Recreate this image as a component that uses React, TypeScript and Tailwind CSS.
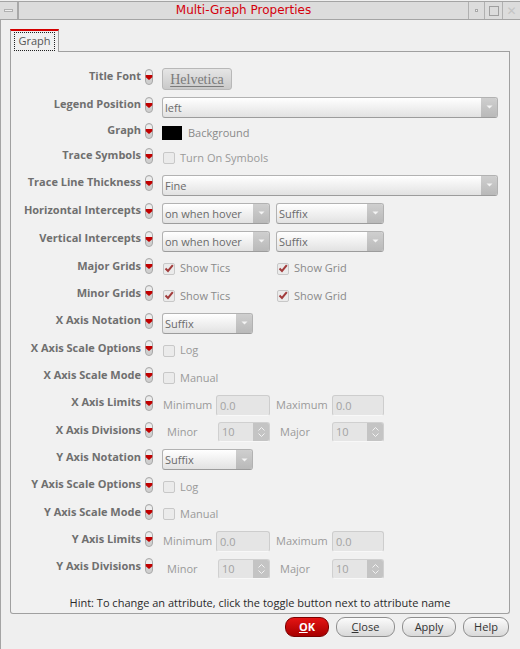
import React from "react";

const Toggle = () => (
  <svg width="8" height="16" viewBox="0 0 8 16" className="shrink-0">
    <rect x="0.5" y="0.5" width="7" height="15" rx="3.5" fill="#cfcfcf" stroke="#a9a9a9" />
    <path d="M1 4.5 A3 3 0 0 1 7 4.5 V6 H1 Z" fill="#ececec" />
    <path d="M0.7 6 H7.3 V8.2 L4 11 L0.7 8.2 Z" fill="#c00000" />
  </svg>
);

const Arrow = () => (
  <svg width="7" height="4" viewBox="0 0 7 4">
    <path d="M0.5 0.5 H6.5 L3.5 3.5 Z" fill="#f4f4f4" />
  </svg>
);

function Select({ value, w }: { value: string; w: string }) {
  return (
    <div
      className={`${w} h-[21px] flex rounded-[3px] border border-[#b2b2b2] border-b-[#9c9c9c] bg-gradient-to-b from-[#ffffff] to-[#e2e2e2] overflow-hidden`}
    >
      <span className="flex-1 pl-[2px] text-[11px] leading-[19px] text-[#6a6a6a]">{value}</span>
      <span className="w-[16px] flex items-center justify-center bg-gradient-to-b from-[#cfcfcf] to-[#b9b9b9]">
        <Arrow />
      </span>
    </div>
  );
}

function Field({ value, w }: { value: string; w: string }) {
  return (
    <div className={`${w} h-[21px] rounded-[3px] border border-[#cdcdcd] border-b-[#f8f8f8] bg-[#e5e5e5] pl-[3px] text-[11px] leading-[19px] text-[#a3a3a3]`}>
      {value}
    </div>
  );
}

function Spin({ value }: { value: string }) {
  return (
    <div className="w-[52px] h-[20px] flex rounded-[3px] border border-[#d0d0d0] border-b-[#f8f8f8] bg-[#e5e5e5] overflow-hidden">
      <span className="flex-1 pl-[3px] text-[11px] leading-[18px] text-[#a3a3a3]">{value}</span>
      <span className="w-[16px] flex flex-col items-center justify-center gap-[2px] bg-[#c4c4c4]">
        <svg width="7" height="4" viewBox="0 0 7 4">
          <path d="M0.5 3.5 L3.5 0.5 L6.5 3.5" fill="none" stroke="#f2f2f2" />
        </svg>
        <svg width="7" height="4" viewBox="0 0 7 4">
          <path d="M0.5 0.5 L3.5 3.5 L6.5 0.5" fill="none" stroke="#f2f2f2" />
        </svg>
      </span>
    </div>
  );
}

function Check({ label, checked, w, tone }: { label: string; checked?: boolean; w?: string; tone?: string }) {
  return (
    <div className={`flex items-center ${w ?? ""}`}>
      <span className="ml-[1px] w-[12px] h-[12px] rounded-[2px] border border-[#c8c8c8] bg-[#ebebeb] flex items-center justify-center">
        {checked && (
          <svg width="10" height="9" viewBox="0 0 10 9">
            <path d="M1.5 4.5 L4 7 L8.8 1.2" fill="none" stroke="#a23c3c" strokeWidth="2" />
          </svg>
        )}
      </span>
      <span className={`ml-[5px] text-[11px] ${tone ?? "text-[#8a8a8a]"}`}>{label}</span>
    </div>
  );
}

function Row({ label, h, children }: { label: string; h: string; children: React.ReactNode }) {
  return (
    <div className={`${h} flex items-center`}>
      <div className="flex items-center mb-[5px]">
        <span className="w-[130px] text-right text-[11px] font-bold text-[#6f6f6f] whitespace-nowrap">{label}</span>
        <span className="ml-[4px]">
          <Toggle />
        </span>
      </div>
      <div className="ml-[9px] flex items-center">{children}</div>
    </div>
  );
}

function Btn({ children, w, primary }: { children: React.ReactNode; w: string; primary?: boolean }) {
  return (
    <div
      className={`${w} h-[20px] rounded-[9px] border flex items-center justify-center text-[11px] ${
        primary
          ? "border-[#7a0000] bg-gradient-to-b from-[#e41414] to-[#a80000] text-white font-bold"
          : "border-[#8e8e8e] bg-gradient-to-b from-[#fbfbfb] to-[#d9d9d9] text-[#333333]"
      }`}
    >
      {children}
    </div>
  );
}

const dim = "text-[#9a9a9a]";

export default function App() {
  const rh = "h-[27.3px]";
  return (
    <div className="w-[520px] h-[649px] bg-[#efefef] flex flex-col font-['Open_Sans',sans-serif] overflow-hidden">
      {/* title bar */}
      <div className="mt-[1px] h-[19px] flex border-t border-b border-[#a4a4a4] bg-[#dcdcdc] font-['DejaVu_Sans',sans-serif]">
        <div className="w-[19px] border-r-2 border-[#a8a8a8] flex items-center justify-center">
          <span className="w-[9px] h-[3px] bg-[#efefef] border border-[#b0b0b0]" />
        </div>
        <div className="flex-1 text-center text-[12px] leading-[17px] text-[#d4000c]">Multi-Graph Properties</div>
        <div className="w-[17px] border-l border-r border-[#b0b0b0] flex items-center justify-center">
          <span className="w-[3px] h-[3px] bg-[#f4f4f4] border border-[#a8a8a8]" />
        </div>
        <div className="w-[18px] border-r border-[#b0b0b0] flex items-center justify-center">
          <span className="w-[10px] h-[10px] border border-[#a0a0a0]" />
        </div>
        <div className="w-[17px] flex items-center justify-center text-[12px] leading-none text-[#c4c4c4]">✕</div>
      </div>

      <div className="flex-1 flex flex-col border-l border-[#a4a4a4] pl-[9px] pr-[10px] pt-[9px]">
        {/* tab header */}
        <div className="h-[23px] flex items-stretch">
          <div className="w-[49px] border-t-2 border-t-[#d40000] border-l border-r border-[#a0a0a0] bg-[#f0f0f0] px-[3px] pt-[1px] pb-[1px]">
            <div className="h-full border border-dotted border-[#202020] flex items-center justify-center text-[11px] text-[#555555]">
              Graph
            </div>
          </div>
          <div className="flex-1 border-b border-[#a0a0a0]" />
        </div>

        {/* panel */}
        <div className="h-[562px] flex flex-col border-l border-r border-b border-[#a0a0a0] rounded-b-[3px] bg-[#f1f1f1] pt-[13px]">
          <Row label="Title Font" h="h-[28px]">
            <div className="w-[70px] h-[22px] rounded-[3px] border border-[#b8b8b8] bg-gradient-to-b from-[#e6e6e6] to-[#c9c9c9] flex items-center justify-center font-['Liberation_Serif',serif] text-[14px] text-[#7a7a7a] underline underline-offset-[2px]">
              Helvetica
            </div>
          </Row>
          <Row label="Legend Position" h="h-[28px]">
            <Select value="left" w="w-[336px]" />
          </Row>
          <Row label="Graph" h="h-[24px]">
            <span className="w-[20px] h-[14px] bg-black" />
            <span className="ml-[6px] text-[11px] text-[#8a8a8a]">Background</span>
          </Row>
          <Row label="Trace Symbols" h="h-[26px]">
            <Check label="Turn On Symbols" tone={dim} />
          </Row>
          <Row label="Trace Line Thickness" h="h-[28px]">
            <Select value="Fine" w="w-[336px]" />
          </Row>
          <Row label="Horizontal Intercepts" h="h-[28px]">
            <Select value="on when hover" w="w-[108px]" />
            <span className="w-[6px]" />
            <Select value="Suffix" w="w-[108px]" />
          </Row>
          <Row label="Vertical Intercepts" h="h-[28px]">
            <Select value="on when hover" w="w-[108px]" />
            <span className="w-[6px]" />
            <Select value="Suffix" w="w-[108px]" />
          </Row>
          <Row label="Major Grids" h={rh}>
            <Check label="Show Tics" checked w="w-[114px]" />
            <Check label="Show Grid" checked />
          </Row>
          <Row label="Minor Grids" h={rh}>
            <Check label="Show Tics" checked w="w-[114px]" />
            <Check label="Show Grid" checked />
          </Row>
          <Row label="X Axis Notation" h={rh}>
            <Select value="Suffix" w="w-[91px]" />
          </Row>
          <Row label="X Axis Scale Options" h={rh}>
            <Check label="Log" tone={dim} />
          </Row>
          <Row label="X Axis Scale Mode" h={rh}>
            <Check label="Manual" tone={dim} />
          </Row>
          <Row label="X Axis Limits" h={rh}>
            <span className={`w-[54px] pl-[1px] text-[11px] ${dim}`}>Minimum</span>
            <Field value="0.0" w="w-[54px]" />
            <span className={`ml-[6px] w-[56px] text-[11px] ${dim}`}>Maximum</span>
            <Field value="0.0" w="w-[52px]" />
          </Row>
          <Row label="X Axis Divisions" h={rh}>
            <span className={`w-[56px] pl-[5px] text-[11px] ${dim}`}>Minor</span>
            <Spin value="10" />
            <span className={`ml-[6px] w-[56px] pl-[4px] text-[11px] ${dim}`}>Major</span>
            <Spin value="10" />
          </Row>
          <Row label="Y Axis Notation" h={rh}>
            <Select value="Suffix" w="w-[91px]" />
          </Row>
          <Row label="Y Axis Scale Options" h={rh}>
            <Check label="Log" tone={dim} />
          </Row>
          <Row label="Y Axis Scale Mode" h={rh}>
            <Check label="Manual" tone={dim} />
          </Row>
          <Row label="Y Axis Limits" h={rh}>
            <span className={`w-[54px] pl-[1px] text-[11px] ${dim}`}>Minimum</span>
            <Field value="0.0" w="w-[54px]" />
            <span className={`ml-[6px] w-[56px] text-[11px] ${dim}`}>Maximum</span>
            <Field value="0.0" w="w-[52px]" />
          </Row>
          <Row label="Y Axis Divisions" h={rh}>
            <span className={`w-[56px] pl-[5px] text-[11px] ${dim}`}>Minor</span>
            <Spin value="10" />
            <span className={`ml-[6px] w-[56px] pl-[4px] text-[11px] ${dim}`}>Major</span>
            <Spin value="10" />
          </Row>

          <div className="mt-auto pb-[2px] text-center text-[11px] leading-[16px] text-[#2a2a2a]">
            Hint: To change an attribute, click the toggle button next to attribute name
          </div>
        </div>

        {/* buttons */}
        <div className="mt-[3px] flex justify-end gap-[7px] pr-[1px]">
          <Btn w="w-[44px]" primary>
            <span className="underline">O</span>K
          </Btn>
          <Btn w="w-[59px]">
            <span className="underline">C</span>lose
          </Btn>
          <Btn w="w-[54px]">Apply</Btn>
          <Btn w="w-[46px]">Help</Btn>
        </div>
        <div className="h-[12px]" />
      </div>
    </div>
  );
}
